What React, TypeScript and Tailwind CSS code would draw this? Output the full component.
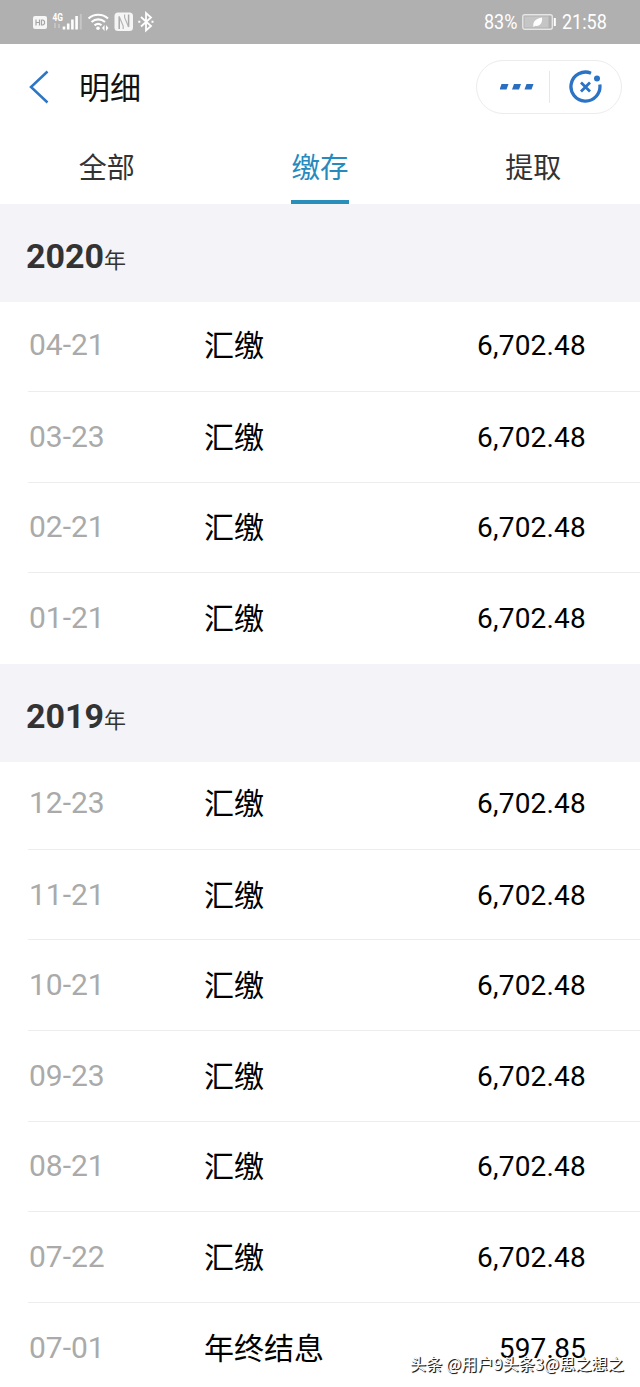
interface RecordItem {
  date: string;
  label: string;
  amount: string;
}

interface YearGroup {
  year: string;
  items: RecordItem[];
}

const deposit = (date: string): RecordItem => ({ date, label: "汇缴", amount: "6,702.48" });

const groups: YearGroup[] = [
  {
    year: "2020",
    items: ["04-21", "03-23", "02-21", "01-21"].map(deposit),
  },
  {
    year: "2019",
    items: [
      ...["12-23", "11-21", "10-21", "09-23", "08-21", "07-22"].map(deposit),
      { date: "07-01", label: "年终结息", amount: "597.85" },
    ],
  },
];

const tabs = ["全部", "缴存", "提取"];

function StatusBar() {
  return (
    <div className="flex h-11 items-center justify-between bg-[#b0b0b0] pl-8 pr-[34px] text-white">
      <svg width="124" height="24" viewBox="0 0 124 24" fill="none" stroke="#fff">
        {/* HD badge */}
        <rect x="1" y="6" width="14" height="13" rx="2" fill="#f6f6f6" stroke="none" />
        <path d="M4 9.500v6M7.500 9.500v6M4 12.500h3.500M9.500 10h1.500l1.500 1.200v2.600l-1.500 1.200h-1.500z" stroke="#a5a5a5" strokeWidth="1.200" />
        {/* Signal */}
        <text x="20.500" y="11" fill="#fff" stroke="none" fontSize="10.500" fontWeight="700" fontFamily="Roboto, sans-serif" textLength="10.500" lengthAdjust="spacingAndGlyphs">4G</text>
        <path d="M23 13v5M27 14v4" stroke="#c4c4c4" strokeWidth="2" />
        <path d="M32 16.500v3M36.200 13.500v6M40.400 9.500v10M44.600 6v13.500" strokeWidth="2.600" />
        <path d="M48.800 4v15.500" stroke="#c6c6c6" strokeWidth="2" />
        {/* Wi-Fi */}
        <path d="M56.500 8.500c5.500-5 14-5 19.500 0M59.500 12c4-3.500 9.500-3.500 13.500 0M62.500 15.300c2.300-1.800 5-1.800 7 0" strokeWidth="2.100" />
        <circle cx="66" cy="18.300" r="1.800" fill="#fff" stroke="none" />
        <path d="M72.500 15l-2.500 3 2.500 3zM74 15l2.500 3-2.500 3z" fill="#fff" stroke="none" />
        {/* NFC */}
        <rect x="82.500" y="2.500" width="18.500" height="18.500" rx="3.500" fill="#f5f5f5" stroke="none" />
        <path d="M87.200 19V6.500M96.600 4.500V17" stroke="#a8a8a8" strokeWidth="1.500" />
        <path d="M87.200 6.500l4 9.500v3M96.600 17l-4-9.500v-3" stroke="#b4b4b4" strokeWidth="1.200" />
        {/* Bluetooth */}
        <path d="M109 7l10 9-5 4.500V3l5 4.500-10 9" strokeWidth="1.800" />
        <path d="M106.300 11.800h2M119.500 11.800h2" strokeWidth="2" />
      </svg>
      <div className="flex items-center text-[20px] leading-none">
        <span className="w-[33px] origin-left scale-x-[0.9] whitespace-nowrap">83%</span>
        <svg className="ml-[5px]" width="35" height="18" viewBox="0 0 35 18" fill="none">
          <rect x="0.800" y="1.800" width="29.500" height="14.500" rx="2" stroke="#e6e6e6" strokeWidth="1.400" />
          <rect x="2.500" y="3.500" width="24" height="11" fill="#c5c5c5" />
          <path d="M11.500 14c-1-5 2-8.500 8.500-9.500.8 5-2 9-6.500 8.300z" fill="#fff" />
          <path d="M32.800 5v8" stroke="#fff" strokeWidth="2" />
        </svg>
        <span className="ml-[5px] w-[44px] origin-left scale-x-[0.9] whitespace-nowrap">21:58</span>
      </div>
    </div>
  );
}

function NavBar() {
  return (
    <header className="flex h-[86px] items-center pl-7 pr-[18px]">
      <svg width="22" height="36" viewBox="0 0 22 36" fill="none">
        <path d="M19.500 2.500L3 18l16.500 15.500" stroke="#2c76c4" strokeWidth="2.500" />
      </svg>
      <h1 className="ml-[29px] pt-[2px] text-[31px] leading-none text-[#111]">明细</h1>
      <div className="ml-auto flex h-[54px] w-[146px] items-center rounded-full border border-[#ececec]">
        <div className="flex w-[72px] justify-center pl-2">
          <svg width="34" height="8" viewBox="0 0 34 8" fill="#2a6fbf">
            <path d="M1.500 1h7l-2 5.500h-7zM14 1h7l-2 5.500h-7zM26.500 1h7l-2 5.500h-7z" />
          </svg>
        </div>
        <div className="h-8 w-px bg-[#e8e8e8]" />
        <svg className="ml-[19px]" width="34" height="34" viewBox="0 0 34 34" fill="none" stroke="#2b73c4">
          <path d="M22 3.200A14.500 14.500 0 1 0 30.800 14.500" strokeWidth="3.300" />
          <path d="M12 12.500l9 9M21 12.500l-9 9" strokeWidth="2.800" />
          <circle cx="28" cy="8.500" r="3" fill="#2b73c4" stroke="none" />
        </svg>
      </div>
    </header>
  );
}

function Tabs() {
  return (
    <nav className="grid h-[74px] grid-cols-3">
      {tabs.map((tab) => {
        const active = tab === "缴存";
        return (
          <div key={tab} className="flex justify-center">
            <div
              className={
                active
                  ? "border-b-4 border-[#2a8ebb] pt-6 text-[28.5px] leading-[30px] text-[#268abf]"
                  : "pt-6 text-[28px] leading-[30px] text-[#333]"
              }
            >
              {tab}
            </div>
          </div>
        );
      })}
    </nav>
  );
}

function Group({ year, items }: YearGroup) {
  return (
    <section className="group">
      <h2 className="flex h-[98px] items-baseline bg-[#f4f3f8] pl-[26px] pt-[32px] text-[#333]">
        <span className="text-[34px] font-bold leading-[40px]">{year}</span>
        <span className="text-[22px] leading-[40px]">年</span>
      </h2>
      <ul className="pl-7">
        {items.map((item, i) => (
          <li
            key={item.date}
            className={`flex items-center border-b border-[#ededed] pr-[54px] last:border-transparent ${
              i === 0 ? "h-[90px] pb-1 group-last-of-type:h-[88px]" : "h-[90.600px]"
            }`}
          >
            <span className="w-[176px] pb-px pl-px text-[30px] text-[#aaa]">{item.date}</span>
            <span className="pt-[2px] text-[30px] leading-[44px] text-black">{item.label}</span>
            <span className="ml-auto pt-[2px] text-[28px] tracking-[0.2px] text-black">{item.amount}</span>
          </li>
        ))}
      </ul>
    </section>
  );
}

export default function App() {
  return (
    <div className="relative h-[1387px] w-[640px] overflow-hidden bg-white font-['Roboto','Noto_Sans_CJK_SC',sans-serif]">
      <StatusBar />
      <NavBar />
      <Tabs />
      {groups.map((group) => (
        <Group key={group.year} {...group} />
      ))}

      {/* Watermark */}
      <div className="absolute left-[410px] top-[1353px] whitespace-nowrap font-['Noto_Sans_CJK_SC',sans-serif] text-[16px] leading-5 tracking-[0.15px] text-white [text-shadow:1px_1px_0_#222,1px_1px_1px_#444]">
        头条 @用户9头条3@思之想之
      </div>
    </div>
  );
}
